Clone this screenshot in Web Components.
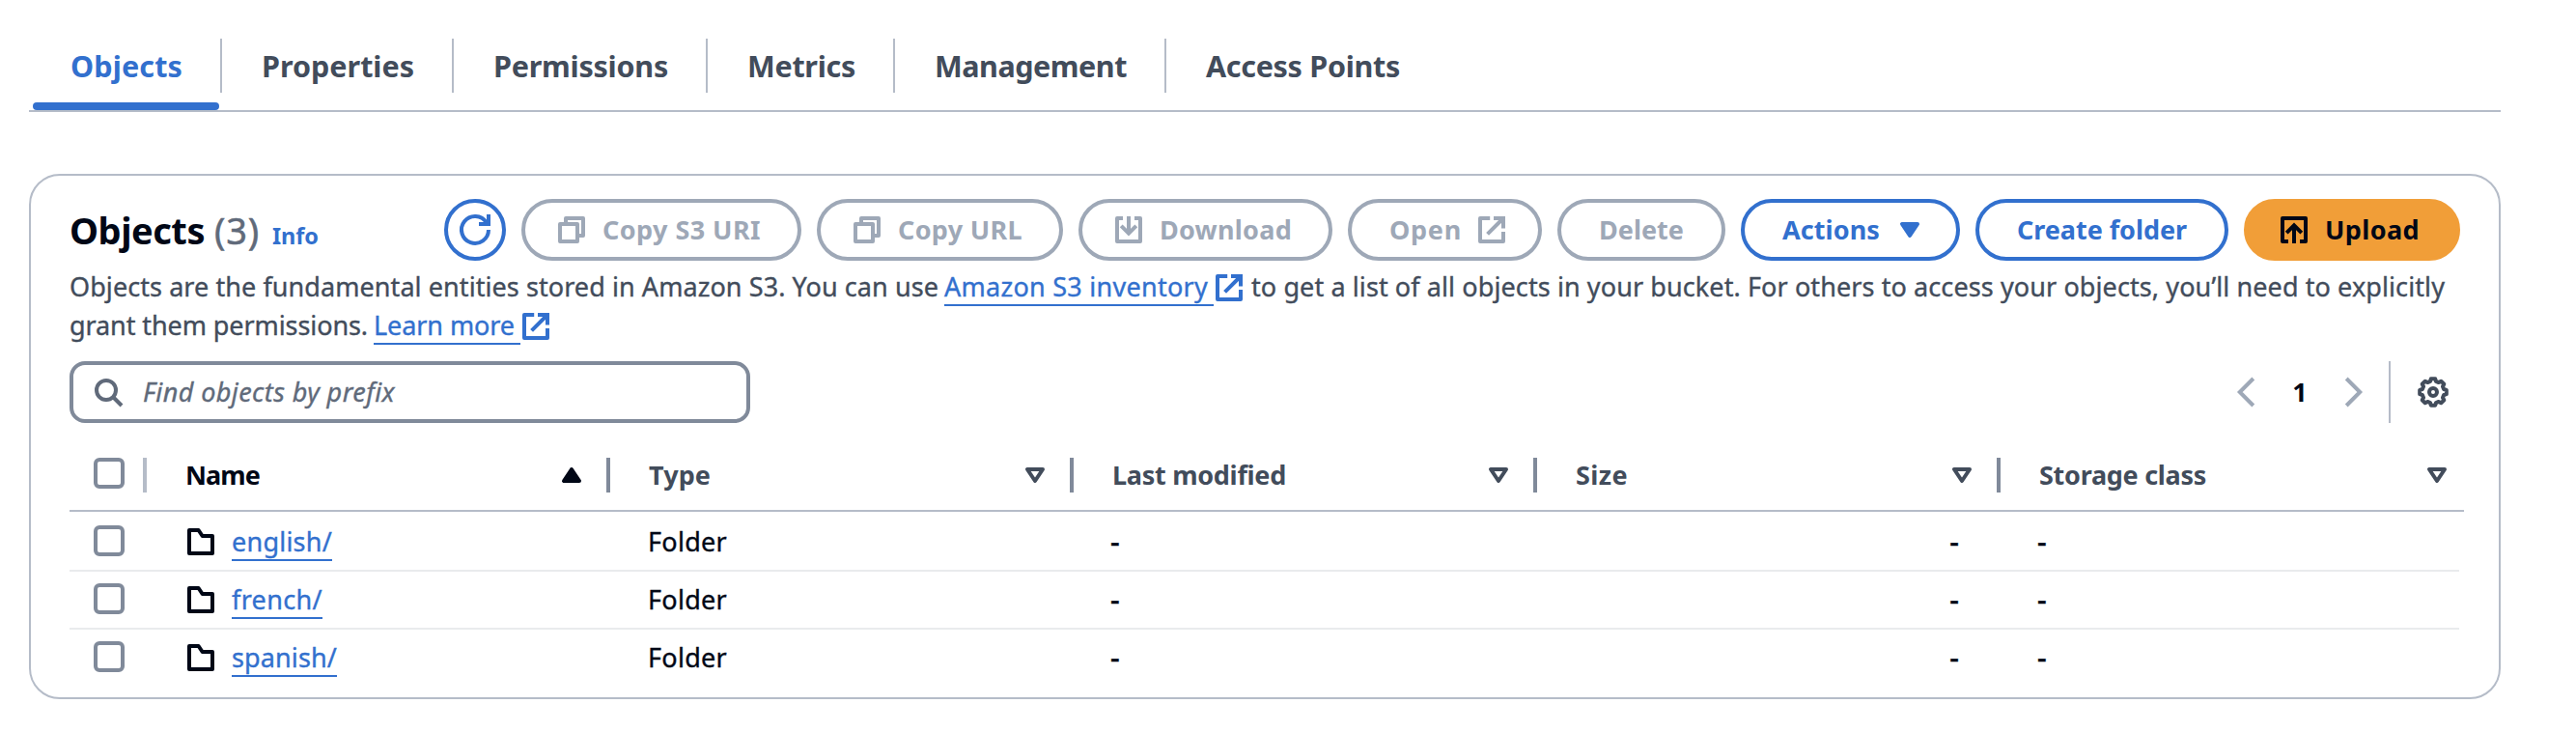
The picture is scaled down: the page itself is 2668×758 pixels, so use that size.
<!DOCTYPE html>
<html lang="en">
<head>
<meta charset="utf-8">
<title>Objects</title>
<style>
  :root {
    --blue: #3270ce; --ink: #000716; --slate: #424c5b; --muted: #606a7a;
    --disabled: #9ea8b7; --control: #808a9a; --line: #b5bcc8; --row-line: #e9ebed;
  }
  body { margin: 0; background: #fff; color: var(--slate); font: 400 27px/40px "Noto Sans", "Open Sans", sans-serif; -webkit-text-stroke: .35px; }
</style>
</head>
<body>
<s3-page></s3-page>
<script>
const define = (name, html, setup) => {
  const tpl = document.createElement('template');
  tpl.innerHTML = html;
  customElements.define(name, class extends HTMLElement {
    constructor() {
      super();
      this.attachShadow({ mode: 'open' }).append(tpl.content.cloneNode(true));
    }
    connectedCallback() { if (setup) setup(this, this.shadowRoot); }
  });
};

/* 16-unit outline icons */
const gear = (() => {
  const pts = [];
  for (let k = 0; k < 8; k++) {
    for (const [da, r] of [[-15, 5.75], [-9, 7], [9, 7], [15, 5.75]]) {
      const a = (k * 45 + da) * Math.PI / 180;
      pts.push((8 + r * Math.sin(a)).toFixed(2) + ' ' + (8 - r * Math.cos(a)).toFixed(2));
    }
  }
  return 'M' + pts.join('L') + 'Z';
})();
const ICONS = {
  refresh: '<path d="M15 0v5h-5M15 8A7 7 0 1 1 13.9 4.2"/>',
  copy: '<path stroke-linejoin="round" d="M2 5h9v9H2zM5 5V2h9v9h-3"/>',
  download: '<path stroke-linejoin="round" d="M5 2H2v12h12V2h-3"/><path d="M8 1v8.5M4.1 5.9 8 9.8l3.9-3.9"/>',
  upload: '<path stroke-linejoin="round" d="M5 14H2V2h12v12h-3"/><path d="M8 15V6.5M4.1 9.6 8 5.7l3.9 3.9"/>',
  external: '<path stroke-linejoin="round" d="M7.1 2H2v12h12V9"/><path d="M9 2h5v5.2M14 2l-8.2 8.2"/>',
  caret: '<path fill="currentColor" stroke-linejoin="round" d="M4 5h8l-4 6z"/>',
  'caret-up': '<path fill="currentColor" stroke-linejoin="round" d="M4 11h8L8 5z"/>',
  'caret-line': '<path stroke-linejoin="round" d="M4 5h8l-4 6z"/>',
  left: '<path d="M11.9 1l-7 7 7 7"/>',
  right: '<path d="M4.1 1l7 7-7 7"/>',
  search: '<circle cx="7" cy="7" r="5"/><path d="M10.5 10.5 15 15"/>',
  folder: '<path stroke-linejoin="round" d="M2 14V2h4.8l2 3H14v9z"/>',
  gear: `<path stroke-linejoin="round" d="${gear}"/><circle cx="8" cy="8" r="2"/>`
};
define('s3-icon', `<style>:host{display:block;width:32px;height:32px;flex:none}svg{display:block}</style>
<svg width="32" height="32" viewBox="0 0 16 16" fill="none" stroke="currentColor" stroke-width="2" overflow="visible"></svg>`,
  (el, root) => { root.querySelector('svg').innerHTML = ICONS[el.getAttribute('name')]; });

/* A label tracked so that it fills the width it is given */
define('s3-text', `<style>:host{display:block;flex:none;white-space:nowrap;font-variant-ligatures:none}span{display:inline-block}</style><span><slot></slot></span>`,
  (el, root) => {
    const w = +el.getAttribute('w'), s = root.querySelector('span');
    el.style.width = w + 'px';
    s.style.letterSpacing = (w - s.getBoundingClientRect().width) / el.textContent.length + 'px';
  });

define('s3-tab', `<style>
:host{display:flex;align-items:center;height:92px;font-weight:700;font-size:30.5px;position:relative;-webkit-text-stroke:0}
.in{padding:0 39px 0 41px;height:56px;line-height:56px;border-right:2px solid var(--line)}
:host([last]) .in{border:0}
:host([active]){color:var(--blue)}
:host([active])::after{content:"";position:absolute;left:2px;right:3px;bottom:0;height:8px;border-radius:4px;background:var(--blue)}
</style><div class="in"><slot></slot></div>`);

define('s3-tabs', `<style>:host{display:flex;margin:22px 78px 0 30px;padding-left:2px;border-bottom:2px solid var(--line)}</style><slot></slot>`);

define('s3-button', `<style>
:host{display:flex;box-sizing:border-box;height:64px;align-items:center;justify-content:center;border:4px solid var(--blue);border-radius:32px;color:var(--blue);font-weight:700;gap:15px;padding:0 39px;-webkit-text-stroke:0}
:host([lead]){padding:0 38px 0 32px;gap:16px}
:host([trail]){padding-right:32px}
:host([round]){width:64px;padding:0}
:host([disabled]){border-color:var(--disabled);color:var(--disabled)}
:host([primary]){background:#f19e38;border-color:#f19e38;color:var(--ink)}
</style><slot></slot>`);

define('s3-link', `<style>:host{display:block;box-sizing:border-box;height:40px;line-height:40px;border-bottom:2px solid var(--blue);color:var(--blue);flex:none}</style><slot></slot>`);

define('s3-header', `<style>
:host{display:flex;justify-content:space-between;height:64px}
.title{display:flex;align-items:baseline;line-height:64px;font-size:38px;font-weight:700;color:var(--ink);-webkit-text-stroke:0}
.count{font-weight:400;color:var(--muted);margin-left:10px;-webkit-text-stroke:.5px}
.info{font-size:23.5px;color:var(--blue);margin-left:13px}
.actions{display:flex;gap:16px}
</style>
<div class="title"><s3-text w="140">Objects</s3-text><s3-text class="count" w="47">(3)</s3-text><s3-text class="info" w="48">Info</s3-text></div>
<div class="actions">
<s3-button round><s3-icon name="refresh"></s3-icon></s3-button>
<s3-button disabled lead><s3-icon name="copy"></s3-icon><s3-text w="164">Copy S3 URI</s3-text></s3-button>
<s3-button disabled lead><s3-icon name="copy"></s3-icon><s3-text w="129">Copy URL</s3-text></s3-button>
<s3-button disabled lead><s3-icon name="download"></s3-icon><s3-text w="137">Download</s3-text></s3-button>
<s3-button disabled trail><s3-text w="75">Open</s3-text><s3-icon name="external"></s3-icon></s3-button>
<s3-button disabled><s3-text w="88">Delete</s3-text></s3-button>
<s3-button trail><s3-text w="101">Actions</s3-text><s3-icon name="caret"></s3-icon></s3-button>
<s3-button><s3-text w="176">Create folder</s3-text></s3-button>
<s3-button primary lead><s3-icon name="upload"></s3-icon><s3-text w="98">Upload</s3-text></s3-button>
</div>`);

define('s3-description', `<style>
:host{display:block;margin-top:7px}
div{display:flex;height:40px}
s3-icon{color:var(--blue);margin-top:5px}
s3-link{padding-right:6px;margin-left:6px}
</style>
<div><s3-text w="900">Objects are the fundamental entities stored in Amazon S3. You can use</s3-text><s3-link><s3-text w="273">Amazon S3 inventory</s3-text></s3-link><s3-icon name="external"></s3-icon><s3-text w="1236" style="margin-left:7px">to get a list of all objects in your bucket. For others to access your objects, you’ll need to explicitly</s3-text></div>
<div><s3-text w="309">grant them permissions.</s3-text><s3-link><s3-text w="146">Learn more</s3-text></s3-link><s3-icon name="external"></s3-icon></div>`);

define('s3-toolbar', `<style>
:host{display:flex;justify-content:space-between;margin-top:17px;height:64px}
.search{display:flex;align-items:center;box-sizing:border-box;width:705px;border:4px solid var(--control);border-radius:16px;padding-left:20px;gap:20px;color:var(--muted);font-style:italic}
.pages{display:flex;align-items:center;color:var(--disabled)}
.num{color:var(--ink);font-weight:700;width:16px;margin:0 32px;text-align:center;-webkit-text-stroke:0}
.rule{width:2px;height:64px;background:var(--line);margin:0 28px 0 20px}
.gear{color:var(--slate);margin-right:12px}
</style>
<div class="search"><s3-icon name="search"></s3-icon><s3-text w="261">Find objects by prefix</s3-text></div>
<div class="pages"><s3-icon name="left"></s3-icon><span class="num">1</span><s3-icon name="right"></s3-icon><span class="rule"></span><s3-icon class="gear" name="gear"></s3-icon></div>`);

define('s3-check', `<style>:host{display:block;box-sizing:border-box;width:32px;height:32px;border:4px solid var(--control);border-radius:6px;margin-left:25px}</style>`);

define('s3-head-cell', `<style>
:host{display:flex;align-items:center;justify-content:space-between;box-sizing:border-box;height:36px;padding:0 20px 0 40px;border-right:4px solid var(--control);font-weight:700;-webkit-text-stroke:0}
:host([sorted]){color:var(--ink)}
:host([select]){padding:0;border-color:var(--line)}
:host([last]){padding-right:12px;border:0}
</style><slot></slot>`);

define('s3-table-head', `<style>
:host{display:grid;grid-template-columns:80px repeat(5,480px);align-items:center;width:2480px;height:72px;margin-top:18px;border-bottom:2px solid var(--line)}
s3-check{position:relative;top:-2px}
</style>
<s3-head-cell select><s3-check></s3-check></s3-head-cell>
<s3-head-cell sorted><s3-text w="77">Name</s3-text><s3-icon name="caret-up"></s3-icon></s3-head-cell>
<s3-head-cell><s3-text w="64">Type</s3-text><s3-icon name="caret-line"></s3-icon></s3-head-cell>
<s3-head-cell><s3-text w="180">Last modified</s3-text><s3-icon name="caret-line"></s3-icon></s3-head-cell>
<s3-head-cell><s3-text w="54">Size</s3-text><s3-icon name="caret-line"></s3-icon></s3-head-cell>
<s3-head-cell last><s3-text w="173">Storage class</s3-text><s3-icon name="caret-line"></s3-icon></s3-head-cell>`);

define('s3-row', `<style>
:host{display:grid;grid-template-columns:80px repeat(4,480px) 475px;align-items:center;width:2475px;box-sizing:border-box;height:60px;border-bottom:2px solid var(--row-line);color:var(--ink)}
:host([last]){border-color:transparent}
s3-check{position:relative;top:-1px}
.name{display:flex;align-items:center;padding-left:40px;gap:16px}
.cell{padding-left:39px}
.dash{font-weight:500;font-size:30px;padding-left:38px}
.num{text-align:right;padding:0 43px 0 0}
</style>
<s3-check></s3-check>
<div class="name"><s3-icon name="folder"></s3-icon><s3-link><slot></slot></s3-link></div>
<div class="cell"><s3-text w="82">Folder</s3-text></div><div class="dash">-</div><div class="dash num">-</div><div class="dash">-</div>`);

define('s3-panel', `<style>:host{display:block;box-sizing:border-box;margin:64px 78px 0 30px;height:544px;border:2px solid var(--line);border-radius:32px;padding:24px 40px 0}.rows{padding-top:2px}</style>
<s3-header></s3-header><s3-description></s3-description><s3-toolbar></s3-toolbar><s3-table-head></s3-table-head>
<div class="rows">
<s3-row><s3-text w="104">english/</s3-text></s3-row>
<s3-row><s3-text w="94">french/</s3-text></s3-row>
<s3-row last><s3-text w="109">spanish/</s3-text></s3-row>
</div>`);

define('s3-page', `<style>:host{display:flow-root;height:758px;overflow:hidden}</style>
<s3-tabs>
<s3-tab active><s3-text w="116">Objects</s3-text></s3-tab>
<s3-tab><s3-text w="158">Properties</s3-text></s3-tab>
<s3-tab><s3-text w="181">Permissions</s3-text></s3-tab>
<s3-tab><s3-text w="112">Metrics</s3-text></s3-tab>
<s3-tab><s3-text w="199">Management</s3-text></s3-tab>
<s3-tab last><s3-text w="201">Access Points</s3-text></s3-tab>
</s3-tabs>
<s3-panel></s3-panel>`);
</script>
</body>
</html>
